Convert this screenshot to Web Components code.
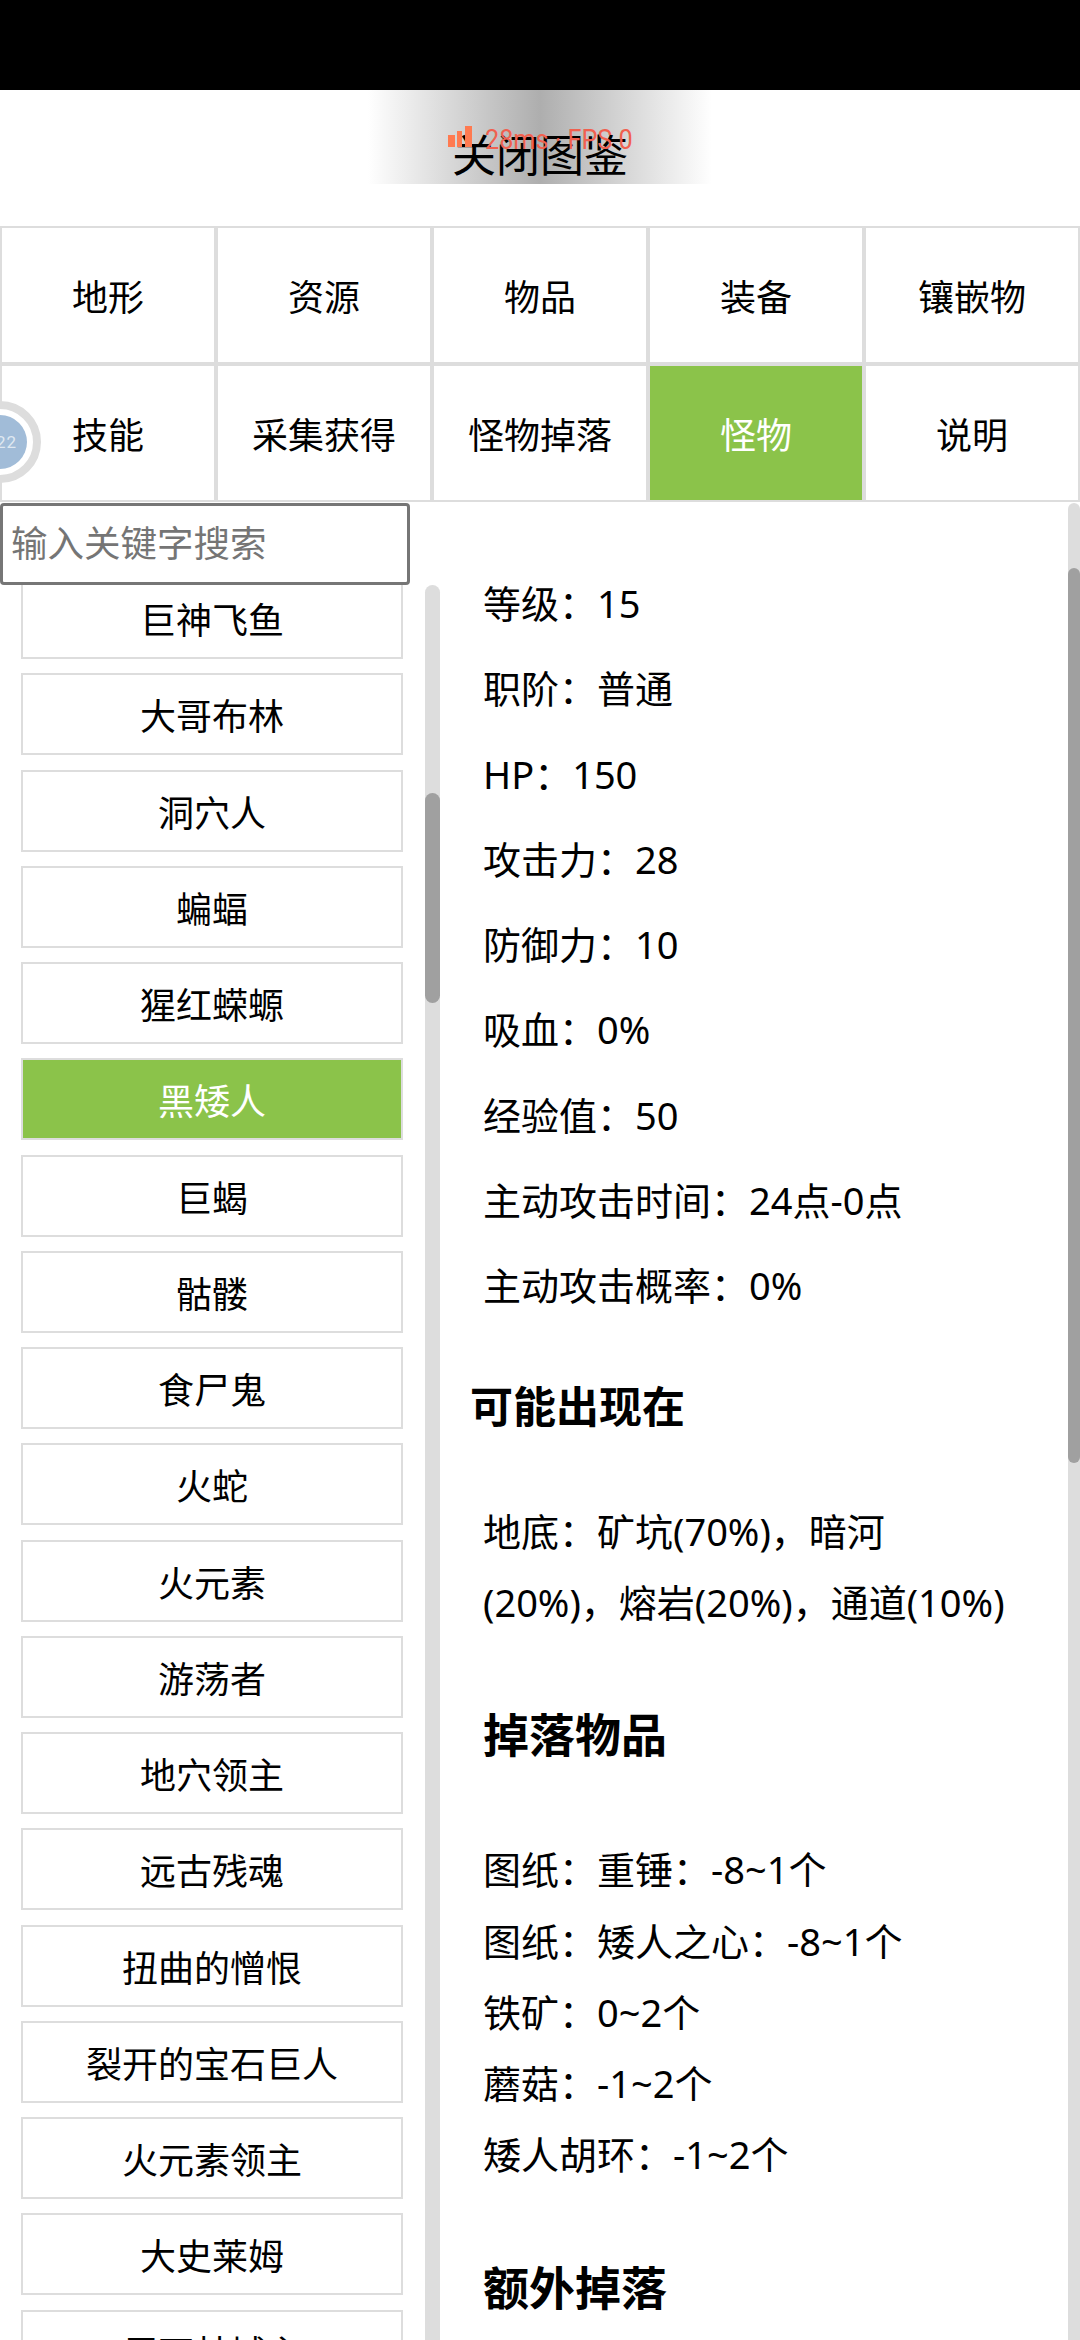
<!DOCTYPE html>
<html lang="zh">
<head>
<meta charset="utf-8">
<title>图鉴</title>
<style>
  html, body {
    margin: 0;
    height: 2340px;
    overflow: hidden;
    background: #fff;
    font-family: Roboto, "Noto Sans CJK SC", sans-serif;
    color: #000;
  }
</style>
</head>
<body>
<game-page>
  <close-button slot="head">关闭图鉴</close-button>
  <tab-bar slot="head"></tab-bar>
  <monster-list slot="left"></monster-list>
  <monster-detail slot="right"></monster-detail>
</game-page>

<script>
const TABS = ["地形", "资源", "物品", "装备", "镶嵌物", "技能", "采集获得", "怪物掉落", "怪物", "说明"];
const MONSTERS = ["巨神飞鱼", "大哥布林", "洞穴人", "蝙蝠", "猩红蝾螈", "黑矮人", "巨蝎", "骷髅", "食尸鬼", "火蛇", "火元素", "游荡者", "地穴领主", "远古残魂", "扭曲的憎恨", "裂开的宝石巨人", "火元素领主", "大史莱姆", "巨石林城主"];
const STATS = ["等级：15", "职阶：普通", "HP：150", "攻击力：28", "防御力：10", "吸血：0%", "经验值：50", "主动攻击时间：24点-0点", "主动攻击概率：0%"];
const DROPS = ["图纸：重锤：-8~1个", "图纸：矮人之心：-8~1个", "铁矿：0~2个", "蘑菇：-1~2个", "矮人胡环：-1~2个"];

class GamePage extends HTMLElement {
  constructor() {
    super();
    this.attachShadow({ mode: "open" }).innerHTML = `
      <style>
        :host { display: block; position: relative; height: 2340px; overflow: hidden; }
        .status { height: 90px; background: #000; }
        .main { display: flex; height: 1837px; }
        .fps {
          position: absolute; left: 448px; top: 125px;
          display: flex; align-items: flex-end; gap: 13px;
          color: #f0604f; font: 400 28px/30px Roboto, sans-serif;
          white-space: pre;
        }
        .fps span { display: block; width: 170px; transform: scaleX(.9); transform-origin: left; }
        .fps svg { display: block; margin-bottom: 8px; }
        .orb {
          position: absolute; left: -41px; top: 401px; width: 82px; height: 82px;
          box-sizing: border-box; border: 8px solid #ddd; border-radius: 50%;
          background: #fff; display: flex; align-items: center; justify-content: center;
        }
        .orb span {
          width: 54px; height: 54px; border-radius: 50%; background: #a1bcd8; color: #dfe8f1;
          font: 17px/54px Roboto, sans-serif; letter-spacing: 1px;
          text-align: right; box-sizing: border-box; padding-right: 10px;
        }
      </style>
      <div class="status"></div>
      <slot name="head"></slot>
      <div class="main">
        <slot name="left"></slot>
        <slot name="right"></slot>
      </div>
      <div class="fps"><svg width="24" height="21" viewBox="0 0 24 21" fill="#ff7a50"><rect x="0" y="9" width="7" height="12"/><rect x="9" y="5" width="5" height="16"/><rect x="17" y="0" width="7" height="21"/></svg><span>28ms · FPS 0</span></div>
      <div class="orb"><span>22</span></div>
    `;
  }
}

class CloseButton extends HTMLElement {
  constructor() {
    super();
    this.attachShadow({ mode: "open" }).innerHTML = `
      <style>
        :host { display: flex; justify-content: center; height: 136px; }
        div {
          width: 344px; height: 94px; box-sizing: border-box; padding-top: 40px;
          background: linear-gradient(to right, #fff, #aeaeae 50%, #fff);
          font-size: 44px; line-height: 54px; text-align: center;
        }
      </style>
      <div><slot></slot></div>
    `;
  }
}

class TabBar extends HTMLElement {
  constructor() {
    super();
    const cells = TABS.map((t) => `<div class="tab${t === "怪物" ? " on" : ""}">${t}</div>`).join("");
    this.attachShadow({ mode: "open" }).innerHTML = `
      <style>
        :host { display: grid; grid-template-columns: repeat(5, 216px); grid-auto-rows: 138px; height: 277px; }
        .tab {
          border: 2px solid #ddd; display: flex; align-items: center; justify-content: center;
          font-size: 36px; background: #fff;
        }
        .on { background: #8bc34a; color: #fff; }
      </style>
      ${cells}
    `;
  }
}

class ScrollTrack extends HTMLElement {
  constructor() {
    super();
    const top = this.getAttribute("thumb-top");
    const len = this.getAttribute("thumb-height");
    this.attachShadow({ mode: "open" }).innerHTML = `
      <style>
        :host { display: block; flex: none; background: #ddd; border-radius: 8px 8px 0 0; overflow: hidden; }
        div { margin-top: ${top}px; height: ${len}px; background: #a0a0a0; border-radius: 8px; }
      </style>
      <div></div>
    `;
  }
}

class MonsterList extends HTMLElement {
  constructor() {
    super();
    const items = MONSTERS.map((m) => `<div class="item${m === "黑矮人" ? " on" : ""}">${m}</div>`).join("");
    this.attachShadow({ mode: "open" }).innerHTML = `
      <style>
        :host { display: flex; flex-direction: column; width: 440px; flex: none; height: 100%; }
        .search {
          width: 410px; height: 82px; box-sizing: border-box; margin: 0;
          border: 3px solid #767676; border-radius: 4px; padding: 0 8px; outline: none;
          font: 36.5px Roboto, "Noto Sans CJK SC", sans-serif; background: #fff; flex: none;
          position: relative; z-index: 1;
        }
        .search::placeholder { color: #757575; opacity: 1; }
        .body { display: flex; flex: 1; min-height: 0; }
        .items { width: 425px; overflow: hidden; padding: 0 22px 0 21px; box-sizing: border-box; }
        .inner { margin-top: -8px; }
        .item {
          height: 82px; margin-bottom: 14.25px; box-sizing: border-box; border: 2px solid #ddd;
          display: flex; align-items: center; justify-content: center; font-size: 36px;
        }
        .on { background: #8bc34a; color: #fff; }
        scroll-track { width: 15px; }
      </style>
      <input class="search" placeholder="输入关键字搜索">
      <div class="body">
        <div class="items"><div class="inner">${items}</div></div>
        <scroll-track thumb-top="208" thumb-height="210"></scroll-track>
      </div>
    `;
  }
}

class MonsterDetail extends HTMLElement {
  constructor() {
    super();
    const stats = STATS.map((s) => `<div class="stat">${s}</div>`).join("");
    const drops = DROPS.map((s) => `<div class="line">${s}</div>`).join("");
    this.attachShadow({ mode: "open" }).innerHTML = `
      <style>
        :host { display: flex; flex: 1; min-width: 0; height: 100%; }
        .content {
          flex: 1; min-width: 0; overflow: hidden; padding: 58px 10px 0 43px;
          font-family: "Noto Sans", "Noto Sans CJK SC", sans-serif; font-size: 38px;
        }
        .stat { height: 85.25px; line-height: 85px; white-space: nowrap; }
        h3 { margin: 0; font-size: 46px; line-height: 60px; font-weight: 700; }
        .first { margin: 49px 0 0 -13px; font-size: 43px; }
        .where { margin-top: 59px; line-height: 71px; width: 535px; }
        .next { margin-top: 66px; }
        .drops { margin-top: 70px; }
        .line { height: 71.3px; line-height: 71px; white-space: nowrap; }
        .last { margin-top: 66px; }
        scroll-track { width: 12px; }
      </style>
      <div class="content">
        ${stats}
        <h3 class="first">可能出现在</h3>
        <div class="where">地底：矿坑(70%)，暗河 (20%)，熔岩(20%)，通道(10%)</div>
        <h3 class="next">掉落物品</h3>
        <div class="drops">${drops}</div>
        <h3 class="last">额外掉落</h3>
      </div>
      <scroll-track thumb-top="65" thumb-height="895"></scroll-track>
    `;
  }
}

customElements.define("game-page", GamePage);
customElements.define("close-button", CloseButton);
customElements.define("tab-bar", TabBar);
customElements.define("scroll-track", ScrollTrack);
customElements.define("monster-list", MonsterList);
customElements.define("monster-detail", MonsterDetail);
</script>
</body>
</html>
